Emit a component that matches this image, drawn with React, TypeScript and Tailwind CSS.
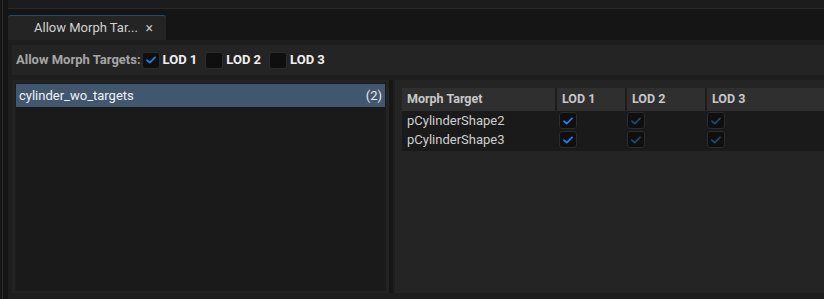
import React from 'react';

const font = { fontFamily: 'Roboto, "Noto Sans", sans-serif' };

// Small check glyph used by the checkboxes
function Check({ color }: { color: string }) {
  return (
    <svg width="10" height="8" viewBox="0 0 10 8">
      <path d="M1 4.2 L3.8 6.6 L9 1.4" fill="none" stroke={color} strokeWidth="1.8" strokeLinecap="round" strokeLinejoin="round" />
    </svg>
  );
}

function Box({ checked, dim }: { checked?: boolean; dim?: boolean }) {
  return (
    <div className="w-[18px] h-[17px] rounded-[3px] bg-[#0f0f0f] border border-[#2b2b2b] flex items-center justify-center shrink-0">
      {checked && <Check color={dim ? '#1c4a78' : '#1f7ee6'} />}
    </div>
  );
}

const lods = ['LOD 1', 'LOD 2', 'LOD 3'];
const targets = ['pCylinderShape2', 'pCylinderShape3'];

export default function App() {
  return (
    <div className="w-[824px] h-[299px] bg-[#151515] flex overflow-hidden" style={font}>
      {/* left frame edge */}
      <div className="w-[2px]" />
      <div className="w-[1px] bg-[#2c2c2c]" />
      <div className="w-[5px]" />

      <div className="flex-1 flex flex-col">
        <div className="h-[9px] bg-[#1c1c1c] border-b border-[#2a2a2a] shrink-0" />
        <div className="h-[6px] shrink-0" />

        {/* tab */}
        <div className="h-[25px] flex shrink-0">
          <div className="w-[158px] bg-[#242424] rounded-t-[3px] border-t border-[#244a70] flex items-center pl-[26px] pr-[13px] justify-between">
            <span className="text-[13px] text-[#d2d2d2]">Allow Morph Tar...</span>
            <span className="text-[14px] text-[#bdbdbd] leading-none">×</span>
          </div>
        </div>

        {/* tab body */}
        <div className="flex-1 bg-[#1e1e1e] flex flex-col pt-[5px] pl-[4px]">
          <div className="h-[30px] bg-[#242424] flex items-center pl-[4px] shrink-0">
            <span className="text-[13px] font-bold text-[#a6a6a6] mr-[1px]">Allow Morph Targets:</span>
            {lods.map((l, i) => (
              <div key={l} className="flex items-center mr-[8px]">
                <Box checked={i === 0} />
                <span className="text-[13px] font-bold text-[#f0f0f0] ml-[3px]">{l}</span>
              </div>
            ))}
          </div>

          <div className="flex-1 flex mt-[5px] mb-[6px]">
            {/* left list */}
            <div className="w-[377px] bg-[#232323] p-[3px] pb-[2px] flex">
              <div className="flex-1 bg-[#1a1a1a] border border-[#1c1c1c]">
                <div className="h-[23px] bg-[#415770] flex items-center justify-between px-[3px]">
                  <span className="text-[13px] text-[#f2f2f2]">cylinder_wo_targets</span>
                  <span className="text-[13px] text-[#e8e8e8]">(2)</span>
                </div>
              </div>
            </div>
            <div className="w-[4px] bg-[#161616]" />
            <div className="w-[2px] bg-[#1d1d1d]" />

            {/* right table */}
            <div className="flex-1 bg-[#242424] pt-[8px] pl-[7px]">
              <div className="bg-[#1a1a1a] pb-[2px]">
                <div className="h-[23px] bg-[#2f2f2f] flex text-[12.5px] font-bold text-[#c8c8c8]">
                  <div className="w-[155px] flex items-center pl-[5px] border-r-2 border-[#1c1c1c]">Morph Target</div>
                  <div className="w-[70px] flex items-center pl-[5px] border-r-2 border-[#1c1c1c]">LOD 1</div>
                  <div className="w-[80px] flex items-center pl-[5px] border-r-2 border-[#1c1c1c]">LOD 2</div>
                  <div className="flex-1 flex items-center pl-[5px]">LOD 3</div>
                </div>
                {targets.map((t) => (
                  <div key={t} className="h-[19px] flex items-center text-[13px] text-[#cfcfcf]">
                    <div className="w-[155px] pl-[5px]">{t}</div>
                    <div className="w-[70px] pl-[2px]"><Box checked /></div>
                    <div className="w-[80px]"><Box checked dim /></div>
                    <div className="flex-1"><Box checked dim /></div>
                  </div>
                ))}
              </div>
            </div>
          </div>
        </div>
      </div>
    </div>
  );
}
